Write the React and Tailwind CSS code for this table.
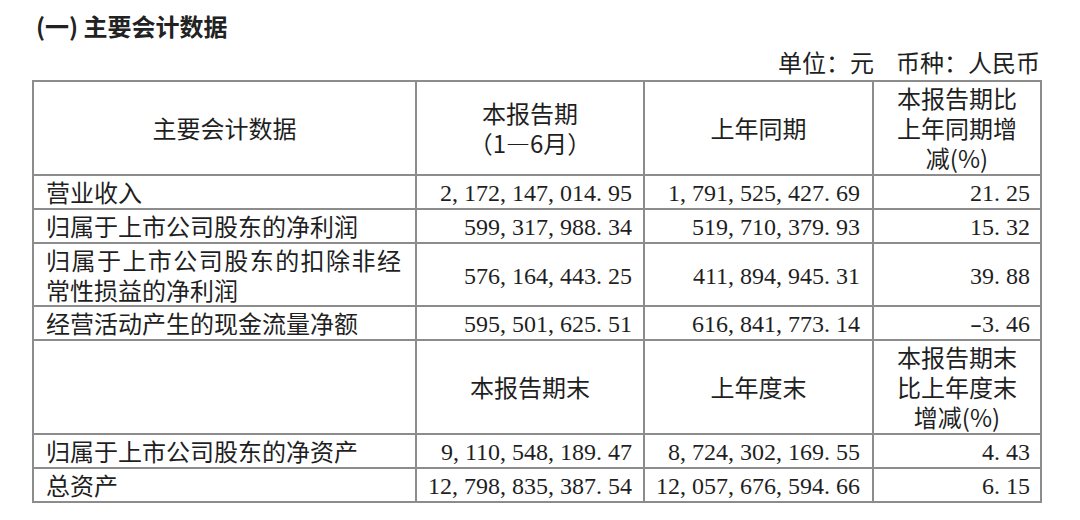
import React from 'react';

const cjk = { fontFamily: '"Noto Sans CJK SC", "Noto Sans", sans-serif' };
const serif = { fontFamily: '"Liberation Serif", "Noto Sans CJK SC", serif' };

const rows = [
    { label: '营业收入', cur: '2,172,147,014.95', prev: '1,791,525,427.69', pct: '21.25' },
    { label: '归属于上市公司股东的净利润', cur: '599,317,988.34', prev: '519,710,379.93', pct: '15.32' },
    { label: '归属于上市公司股东的扣除非经常性损益的净利润', cur: '576,164,443.25', prev: '411,894,945.31', pct: '39.88', tall: true },
    { label: '经营活动产生的现金流量净额', cur: '595,501,625.51', prev: '616,841,773.14', pct: '-3.46' },
];

const rows2 = [
    { label: '归属于上市公司股东的净资产', cur: '9,110,548,189.47', prev: '8,724,302,169.55', pct: '4.43' },
    { label: '总资产', cur: '12,798,835,387.54', prev: '12,057,676,594.66', pct: '6.15' },
];

// digits set like a half-width song font: punctuation takes a full half-em cell
function Num({ v }) {
    return (
        <span style={serif}>
            {v.split('').map((ch, i) => {
                if (ch === ',' || ch === '.') {
                    return <span key={i} className="inline-block w-[0.5em] text-left">{ch}</span>;
                }
                if (ch === '-') {
                    return <span key={i} className="inline-block w-[0.5em] text-center scale-x-150">{ch}</span>;
                }
                return <span key={i}>{ch}</span>;
            })}
        </span>
    );
}

const cell = 'border-2 border-[#8c8c8c] align-middle p-0';

function DataRow({ r }) {
    return (
        <tr>
            <td className={`${cell} pl-[12px] pr-[14px] ${r.tall ? 'h-[63px] leading-[30px] text-justify' : 'h-[34px] leading-[28px] text-left'}`}>
                {r.label}
            </td>
            <td className={`${cell} pr-[11px] text-right leading-[28px]`}><Num v={r.cur} /></td>
            <td className={`${cell} pr-[12px] text-right leading-[28px]`}><Num v={r.prev} /></td>
            <td className={`${cell} pr-[10px] text-right leading-[28px]`}><Num v={r.pct} /></td>
        </tr>
    );
}

export default function App() {
    return (
        <div lang="zh-CN" className="w-[1080px] h-[520px] bg-white text-[#1f1f1f] text-[24px] overflow-hidden" style={cjk}>
            <div className="pl-[36px] pt-[10px] h-[44px] leading-[32px] font-bold text-[#222]">
                (一) 主要会计数据
            </div>
            <div className="w-[1040px] h-[36px] leading-[36px] text-right">
                单位：元<span className="inline-block w-[22px]"></span>币种：人民币
            </div>
            <table className="ml-[32px] w-[1008px] border-collapse table-fixed">
                <colgroup>
                    <col className="w-[383px]" />
                    <col className="w-[228px]" />
                    <col className="w-[229px]" />
                    <col className="w-[168px]" />
                </colgroup>
                <tbody>
                    <tr>
                        <td className={`${cell} h-[94px] text-center leading-[30px]`}>主要会计数据</td>
                        <td className={`${cell} text-center leading-[30px]`}>
                            <div>本报告期</div>
                            <div>（1—6月）</div>
                        </td>
                        <td className={`${cell} text-center leading-[30px]`}>上年同期</td>
                        <td className={`${cell} text-center leading-[30px]`}>
                            <div>本报告期比</div>
                            <div>上年同期增</div>
                            <div>减(%)</div>
                        </td>
                    </tr>
                    {rows.map((r) => <DataRow key={r.label} r={r} />)}
                    <tr>
                        <td className={`${cell} h-[94px]`}></td>
                        <td className={`${cell} text-center leading-[30px]`}>本报告期末</td>
                        <td className={`${cell} text-center leading-[30px]`}>上年度末</td>
                        <td className={`${cell} text-center leading-[30px]`}>
                            <div>本报告期末</div>
                            <div>比上年度末</div>
                            <div>增减(%)</div>
                        </td>
                    </tr>
                    {rows2.map((r) => <DataRow key={r.label} r={r} />)}
                </tbody>
            </table>
        </div>
    );
}
